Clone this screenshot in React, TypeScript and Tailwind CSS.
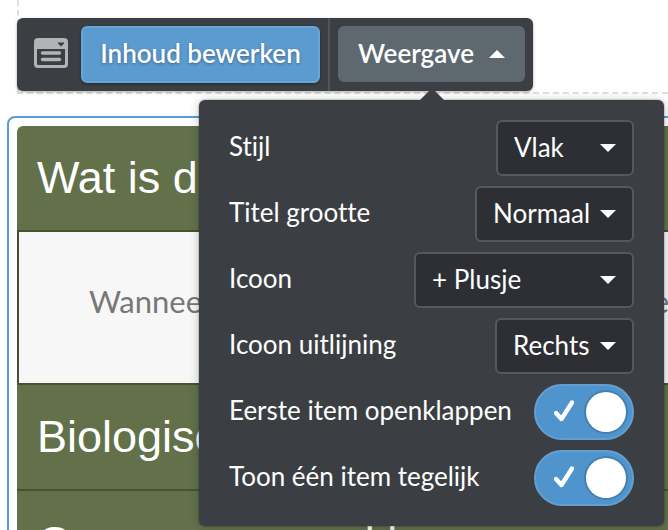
import React from "react";

const uiFont = "font-[Lato,'Open_Sans',sans-serif] [font-variant-ligatures:none]";

function Caret({ up = false }: { up?: boolean }) {
  return (
    <svg width="16" height="8" viewBox="0 0 16 8" fill="white" aria-hidden="true">
      <path d={up ? "M0 8L8 0L16 8Z" : "M0 0H16L8 8Z"} />
    </svg>
  );
}

function PanelIcon() {
  return (
    <svg width="34" height="30" viewBox="0 0 34 30" aria-hidden="true">
      <rect width="34" height="30" rx="4" fill="#b1b3b5" />
      <path d="M3 11H31V25.500Q31 27 29.500 27H4.500Q3 27 3 25.500Z" fill="#3b3f43" />
      <path d="M24 4.500H30V5.500L27 8.500L24 5.500Z" fill="#3b3f43" />
      <path d="M8.500 15H25.500M8.500 21.500H25.500" stroke="#b1b3b5" strokeWidth="3.400" strokeLinecap="round" />
    </svg>
  );
}

type SelectRowProps = { id: string; label: string; options: string[]; width: string };

function SelectRow({ id, label, options, width }: SelectRowProps) {
  return (
    <div className="flex h-14 items-center justify-between">
      <label htmlFor={id} className="pb-1">{label}</label>
      <div className={`relative h-full ${width}`}>
        <select
          id={id}
          className="h-full w-full appearance-none rounded-md border-2 border-[#55595c] bg-[#2d2f34] pb-0.5 pl-4 text-white outline-none"
        >
          {options.map((option) => (
            <option key={option}>{option}</option>
          ))}
        </select>
        <span className="pointer-events-none absolute inset-y-0 right-4.5 flex items-center">
          <Caret />
        </span>
      </div>
    </div>
  );
}

function ToggleRow({ id, label }: { id: string; label: string }) {
  return (
    <div className="flex h-14 items-center justify-between">
      <label htmlFor={id} className="pb-1">{label}</label>
      <div className="relative h-full w-25">
        <input
          id={id}
          type="checkbox"
          defaultChecked
          className="peer block h-full w-full appearance-none rounded-full border-2 border-[#649fd4] bg-[#5094cd] not-checked:bg-[#2d2f34]"
        />
        <svg
          className="pointer-events-none absolute top-4 left-5 opacity-0 peer-checked:opacity-100"
          width="20" height="22" viewBox="0 0 20 22" fill="none" aria-hidden="true"
        >
          <path d="M2 13L7.500 19L18 2.500" stroke="white" strokeWidth="4.400" strokeLinecap="round" strokeLinejoin="round" />
        </svg>
        <span className="pointer-events-none absolute top-2 right-2 size-10 rounded-full bg-white shadow-[0_0_0_2px_#457fb0]" />
      </div>
    </div>
  );
}

function AccordionTitle({ children }: { children: React.ReactNode }) {
  return (
    <h2 className="h-26 bg-[#62714a]">
      <button type="button" className="block h-full w-full px-5 text-left text-[45px] whitespace-nowrap text-white">
        {children}
      </button>
    </h2>
  );
}

export default function App() {
  return (
    <div className="h-screen overflow-hidden bg-white font-['Liberation_Sans',Arial,sans-serif]">
      <div className="relative z-10 ml-[17px] h-[94px] border-b-2 border-l-2 border-dashed border-[#dfdfdf]">
        <div className={`absolute top-[18px] -left-0.5 flex h-[73px] w-[516px] rounded-md bg-[#3b3f43] text-[26px] font-semibold text-white shadow-[0_1px_3px_rgba(0,0,0,0.35)] ${uiFont}`}>
          <div className="flex w-16 items-center pb-1 pl-[17px]">
            <PanelIcon />
          </div>
          <button type="button" className="mt-2 h-[57px] w-[239px] rounded-md border-2 border-[#68a5da] bg-[#5c9bd0] pb-0.5 whitespace-nowrap shadow-[0_1px_3px_rgba(0,0,0,0.4)] text-shadow-[0_1px_3px_rgba(0,0,0,0.35)]">
            Inhoud bewerken
          </button>
          <div className="ml-2 w-0.5 bg-[#4f5559]" />
          <button type="button" aria-expanded="true" className="mx-2 mt-2 flex h-14 flex-1 items-center justify-between rounded-md bg-[#5e696f] px-5">
            <span className="pb-0.5">Weergave</span>
            <Caret up />
          </button>
        </div>

        <section className={`absolute top-[100px] right-1 left-[180px] flex flex-col gap-2.5 rounded-md bg-[#3b3f43] px-[30px] py-5 text-[26px] text-white shadow-[0_0_0_1px_rgba(0,0,0,0.12),0_1px_10px_rgba(0,0,0,0.25)] ${uiFont}`}>
          <svg className="absolute -top-3 left-[221px]" width="24" height="12" viewBox="0 0 24 12" aria-hidden="true">
            <path d="M0 12L12 0L24 12Z" fill="#3b3f43" />
          </svg>
          <SelectRow id="style" label="Stijl" options={["Vlak"]} width="w-[138px]" />
          <SelectRow id="size" label="Titel grootte" options={["Normaal"]} width="w-[159px]" />
          <SelectRow id="icon" label="Icoon" options={["+ Plusje"]} width="w-[220px]" />
          <SelectRow id="align" label="Icoon uitlijning" options={["Rechts"]} width="w-[139px]" />
          <ToggleRow id="first" label="Eerste item openklappen" />
          <ToggleRow id="single" label="Toon één item tegelijk" />
        </section>
      </div>

      <main className="mt-[22px] -mr-5 ml-[7px] rounded-lg border-2 border-[#5c9bd0] p-2">
        <div className="overflow-hidden rounded-t-md">
          <AccordionTitle>Wat is d</AccordionTitle>
          <div className="h-[155px] overflow-hidden border-2 border-[#465233] bg-[#f7f7f7] px-[70px] pt-[46px]">
            <p className={`text-[31px] whitespace-nowrap text-[#777] ${uiFont}`}>
              Wanneer een product deze naam kreeg weet
            </p>
          </div>
          <AccordionTitle>Biologische teelt</AccordionTitle>
          <div className="h-0.5 bg-[#465233]" />
          <AccordionTitle>Gewone warme kip</AccordionTitle>
        </div>
      </main>
    </div>
  );
}
